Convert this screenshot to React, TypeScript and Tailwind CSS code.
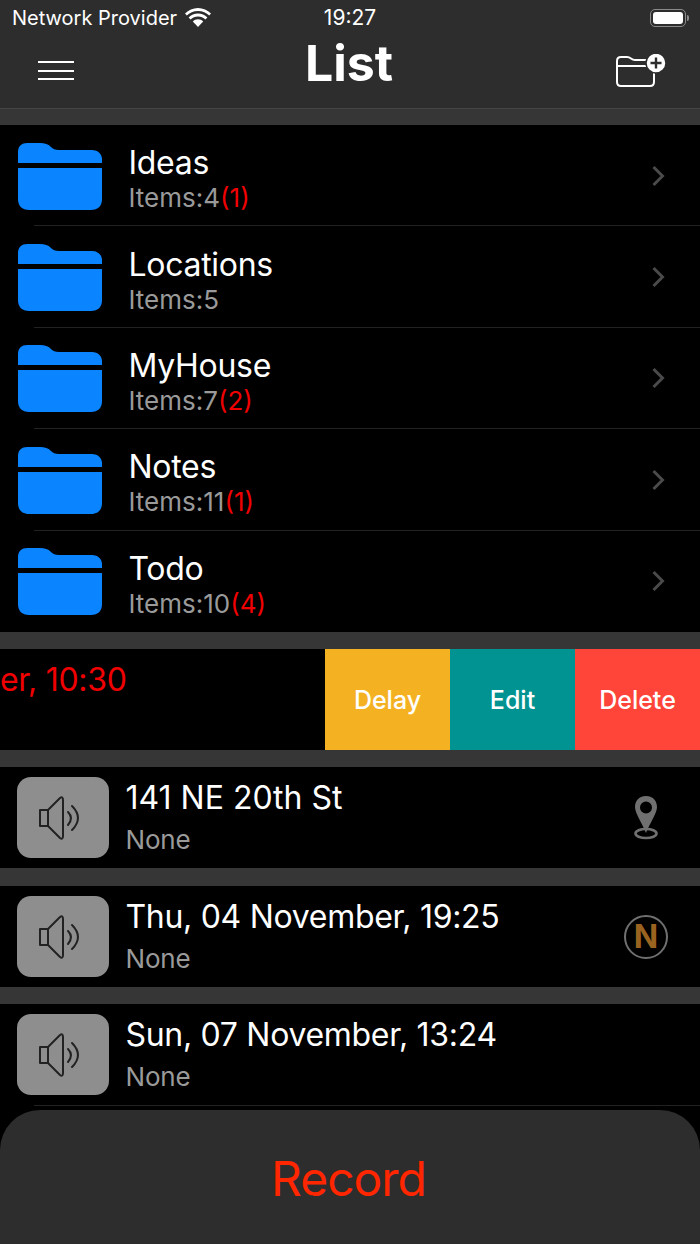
const folders = [
  { name: 'Ideas', count: 4, unread: 1 },
  { name: 'Locations', count: 5 },
  { name: 'MyHouse', count: 7, unread: 2 },
  { name: 'Notes', count: 11, unread: 1 },
  { name: 'Todo', count: 10, unread: 4 },
]

function FolderIcon() {
  return (
    <svg width="84" height="68" viewBox="0 0 84 68" className="shrink-0 mt-[2px]">
      <path
        d="M0 20 V9 C0 3 4 0 9 0 H22 C27 0 30 1 33 4 C35 6 37 7 41 7 H74 C80 7 84 11 84 16 V20 Z"
        fill="#0a84ff"
      />
      <path
        d="M0 25 H84 V56 C84 63 80 67 73 67 H11 C4 67 0 63 0 56 Z"
        fill="#0a84ff"
      />
    </svg>
  )
}

function SpeakerButton() {
  return (
    <div className="w-[92px] h-[81px] shrink-0 rounded-[14px] bg-[#8e8e8e] flex items-center justify-center">
      <svg width="48" height="44" viewBox="0 0 48 44" fill="none" stroke="#222" strokeWidth="2" strokeLinejoin="round" strokeLinecap="round">
        <path d="M1 14 H9 V30 H1 Z" />
        <path d="M9 14 L21 2 Q24 0 24 4 V40 Q24 44 21 42 L9 30" />
        <path d="M29 16 Q35 22 29 29" />
        <path d="M33 10 Q45 22 33 34" />
      </svg>
    </div>
  )
}

function PinIcon() {
  return (
    <svg width="26" height="44" viewBox="0 0 26 44">
      <path
        fillRule="evenodd"
        d="M13 0 C5.5 0 2 5.5 2 11 C2 17 9 27 13 37 C17 27 24 17 24 11 C24 5.5 20.5 0 13 0 Z M13 5.5 A6 6 0 1 1 13 17.5 A6 6 0 1 1 13 5.5 Z"
        fill="#707070"
      />
      <ellipse cx="13" cy="37.5" rx="10.5" ry="4.5" fill="none" stroke="#707070" strokeWidth="2.6" />
    </svg>
  )
}

function RecordingRow({ title, tight = true, trailing }: { title: string; tight?: boolean; trailing?: React.ReactNode }) {
  return (
    <div className="h-[101px] bg-black flex items-center pl-[17px]">
      <SpeakerButton />
      <div className="ml-[16.5px] flex-1">
        <p className={tight ? 'text-[32px] leading-[38px] tracking-[-0.3px] text-white' : 'text-[32px] leading-[38px] text-white'}>{title}</p>
        <p className="text-[26px] leading-[32px] mt-[7px] tracking-[-0.2px] text-[#9a9a9a]">None</p>
      </div>
      {trailing && <div className="w-[44px] mr-[32px] flex justify-center">{trailing}</div>}
    </div>
  )
}

export default function App() {
  return (
    <div className="w-[700px] h-[1244px] overflow-hidden bg-black flex flex-col font-['Inter',sans-serif]">
      <header className="h-[109px] shrink-0 bg-[#2d2d2d] border-b border-[#444] flex flex-col">
        <div className="h-[36px] relative flex items-center pl-[12px] text-[20px] text-white">
          <span>Network Provider</span>
          <svg width="26" height="19" viewBox="0 0 26 19" className="ml-[8px] -mt-[1px]" fill="white">
            <path d="M13 3 C8.5 3 4.5 4.8 1.8 7.6 L0 5.6 C3.5 2.2 8 0 13 0 C18 0 22.5 2.2 26 5.6 L24.2 7.6 C21.5 4.8 17.5 3 13 3 Z" />
            <path d="M13 8.5 C10.2 8.5 7.6 9.6 5.6 11.5 L3.6 9.4 C6.1 7 9.4 5.5 13 5.5 C16.6 5.5 19.9 7 22.4 9.4 L20.4 11.5 C18.4 9.6 15.8 8.5 13 8.5 Z" />
            <path d="M13 11.3 C15 11.3 16.8 12.1 18.2 13.4 L13 19 L7.8 13.4 C9.2 12.1 11 11.3 13 11.3 Z" />
          </svg>
          <span className="absolute left-0 right-0 text-center text-[21px]">19:27</span>
          <div className="absolute left-[650px] top-[9px] w-[36px] h-[18px] rounded-[5px] border border-[#8a8a8a] p-[2px]">
            <div className="w-full h-full rounded-[3px] bg-white" />
          </div>
          <div className="absolute left-[687px] top-[15px] w-[2px] h-[6px] rounded-r bg-[#8a8a8a]" />
        </div>
        <div className="flex-1 relative flex items-start justify-between pl-[38px] pr-[33px]">
          <div className="mt-[25px] w-[36px] flex flex-col gap-[6.5px]">
            <div className="h-[2px] bg-white" />
            <div className="h-[2px] bg-white" />
            <div className="h-[2px] bg-white" />
          </div>
          <h1 className="absolute left-0 right-0 top-[-3px] text-center text-[50px] leading-[60px] font-bold text-white -translate-x-[1px]">List</h1>
          <svg width="52" height="36" viewBox="0 0 52 36" fill="none" className="mt-[18px]" stroke="white" strokeWidth="2" strokeLinecap="round">
            <path d="M2 12 V7 Q2 3 6 3 H12 Q14 3 16 4.5 Q18 6 20 6 H32" />
            <path d="M2 12 H32" />
            <path d="M2 12 V28 Q2 32 6 32 H35 Q39 32 39 28 V18" />
            <circle cx="41" cy="9" r="10" fill="white" stroke="#2d2d2d" strokeWidth="1.5" />
            <path d="M41 3.5 V14.5 M35.5 9 H46.5" stroke="#2d2d2d" strokeWidth="2.4" strokeLinecap="butt" />
          </svg>
        </div>
      </header>

      <div className="h-[16px] shrink-0 bg-[#363636]" />

      <div className="h-[507px] shrink-0 grid grid-rows-5 bg-black">
        {folders.map((f, i) => (
          <div key={f.name} className="relative flex items-center pl-[18px] pr-[35px]">
            <FolderIcon />
            <div className="ml-[26.5px] flex-1 mt-[7px]">
              <p className="text-[32px] leading-[38px] tracking-[-0.3px] text-white">{f.name}</p>
              <p className="text-[26px] leading-[32px] text-[#9a9a9a]">
                Items:{f.count}
                {f.unread !== undefined && <span className="text-[#f00000]">({f.unread})</span>}
              </p>
            </div>
            <svg width="14" height="22" viewBox="0 0 14 22" fill="none" stroke="#4a4a4c" strokeWidth="3">
              <path d="M2.5 2 L11.5 11 L2.5 20" />
            </svg>
            {i < folders.length - 1 && <div className="absolute left-[34px] right-0 bottom-0 h-px bg-[#222]" />}
          </div>
        ))}
      </div>

      <div className="h-[17px] shrink-0 bg-[#363636]" />

      <div className="h-[101px] shrink-0 bg-black flex overflow-hidden">
        <div className="flex-1 pt-[11px] overflow-hidden">
          <p className="text-[32px] leading-[40px] tracking-[-0.3px] text-[#f00000]">er, 10:30</p>
        </div>
        <div className="w-[125px] pt-[2px] flex items-center justify-center bg-[#f4b223] text-[25px] font-medium text-white">Delay</div>
        <div className="w-[125px] pt-[2px] flex items-center justify-center bg-[#009391] text-[25px] font-medium text-white">Edit</div>
        <div className="w-[125px] pt-[2px] flex items-center justify-center bg-[#ff453a] text-[25px] font-medium text-white">Delete</div>
      </div>

      <div className="h-[17px] shrink-0 bg-[#363636]" />
      <RecordingRow title="141 NE 20th St" tight={false} trailing={<PinIcon />} />
      <div className="h-[18px] shrink-0 bg-[#363636]" />
      <RecordingRow
        title="Thu, 04 November, 19:25"
        trailing={
          <div className="w-[44px] h-[44px] rounded-full border-2 border-[#707070] flex items-center justify-center text-[32px] font-bold text-[#9a6420]">
            N
          </div>
        }
      />
      <div className="h-[17px] shrink-0 bg-[#363636]" />
      <RecordingRow title="Sun, 07 November, 13:24" />
      <div className="h-px ml-[34px] bg-[#222]" />

      <button className="mt-[4px] h-[134px] shrink-0 rounded-t-[40px] bg-[#2d2d2d] flex items-center justify-center pt-[4px] pr-[3px] text-[48px] tracking-[-1px] text-[#ff2600]">
        Record
      </button>
    </div>
  )
}
